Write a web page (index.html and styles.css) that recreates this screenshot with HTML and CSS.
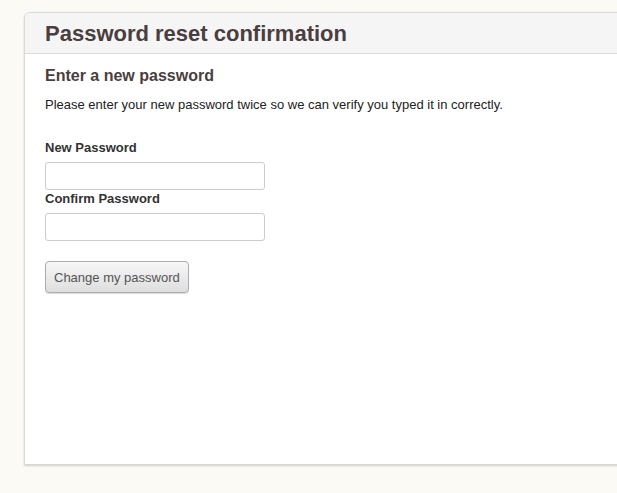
FILE: index.html
```html
<!DOCTYPE html>
<html>
<head>
<meta charset="utf-8">
<link rel="stylesheet" href="styles.css">
</head>
<body>
<div class="card">
  <div class="card-header"><h1 class="title">Password reset confirmation</h1></div>
  <div class="card-body">
    <h2 class="subtitle">Enter a new password</h2>
    <p class="intro">Please enter your new password twice so we can verify you typed it in correctly.</p>
    <form class="form">
      <label class="label" for="p1">New Password</label>
      <input class="input" id="p1" type="password">
      <label class="label" for="p2">Confirm Password</label>
      <input class="input" id="p2" type="password">
      <button class="btn" type="button">Change my password</button>
    </form>
  </div>
</div>
</body>
</html>
```
FILE: styles.css
```css
html, body {
  margin: 0;
  height: 100%;
  overflow: hidden;
}
body {
  background: #fbfaf4;
  padding: 12px 0 0 24px;
  box-sizing: border-box;
  font-family: "Liberation Sans", Arial, sans-serif;
  color: #333;
}
.card {
  width: 720px;
  height: 453px;
  box-sizing: border-box;
  background: #fff;
  border: 1px solid #d9d9d9;
  border-radius: 6px 6px 0 0;
  box-shadow: 0 1px 2px rgba(0,0,0,0.18);
}
.card-header {
  background: #f5f5f5;
  border-bottom: 1px solid #dcdcdc;
  border-radius: 6px 6px 0 0;
  height: 41px;
  box-sizing: border-box;
  padding: 0 0 0 20px;
}
.title {
  margin: 0;
  font-size: 22px;
  line-height: 41px;
  font-weight: bold;
  color: #4a3e3e;
}
.card-body {
  padding: 10px 20px 0 20px;
}
.subtitle {
  margin: 0;
  font-size: 16px;
  line-height: 24px;
  font-weight: bold;
  color: #4a3e3e;
}
.intro {
  margin: 8px 0 0 0;
  font-size: 13px;
  line-height: 18px;
  color: #222;
}
.form {
  display: flex;
  flex-direction: column;
  align-items: flex-start;
  margin-top: 25px;
}
.label {
  font-size: 13px;
  font-weight: bold;
  line-height: 18px;
  color: #333;
  margin-bottom: 5px;
}
.input {
  width: 220px;
  height: 28px;
  box-sizing: border-box;
  border: 1px solid #ccc;
  border-radius: 3px;
  margin: 0;
  background: #fff;
}
.btn {
  margin-top: 20px;
  height: 32px;
  padding: 0 8px;
  font-family: "Liberation Sans", Arial, sans-serif;
  font-size: 13px;
  color: #555;
  border: 1px solid #adadad;
  border-radius: 4px;
  background: linear-gradient(#f7f7f7, #dedede);
  box-shadow: 0 1px 1px rgba(0,0,0,0.15);
}
```
